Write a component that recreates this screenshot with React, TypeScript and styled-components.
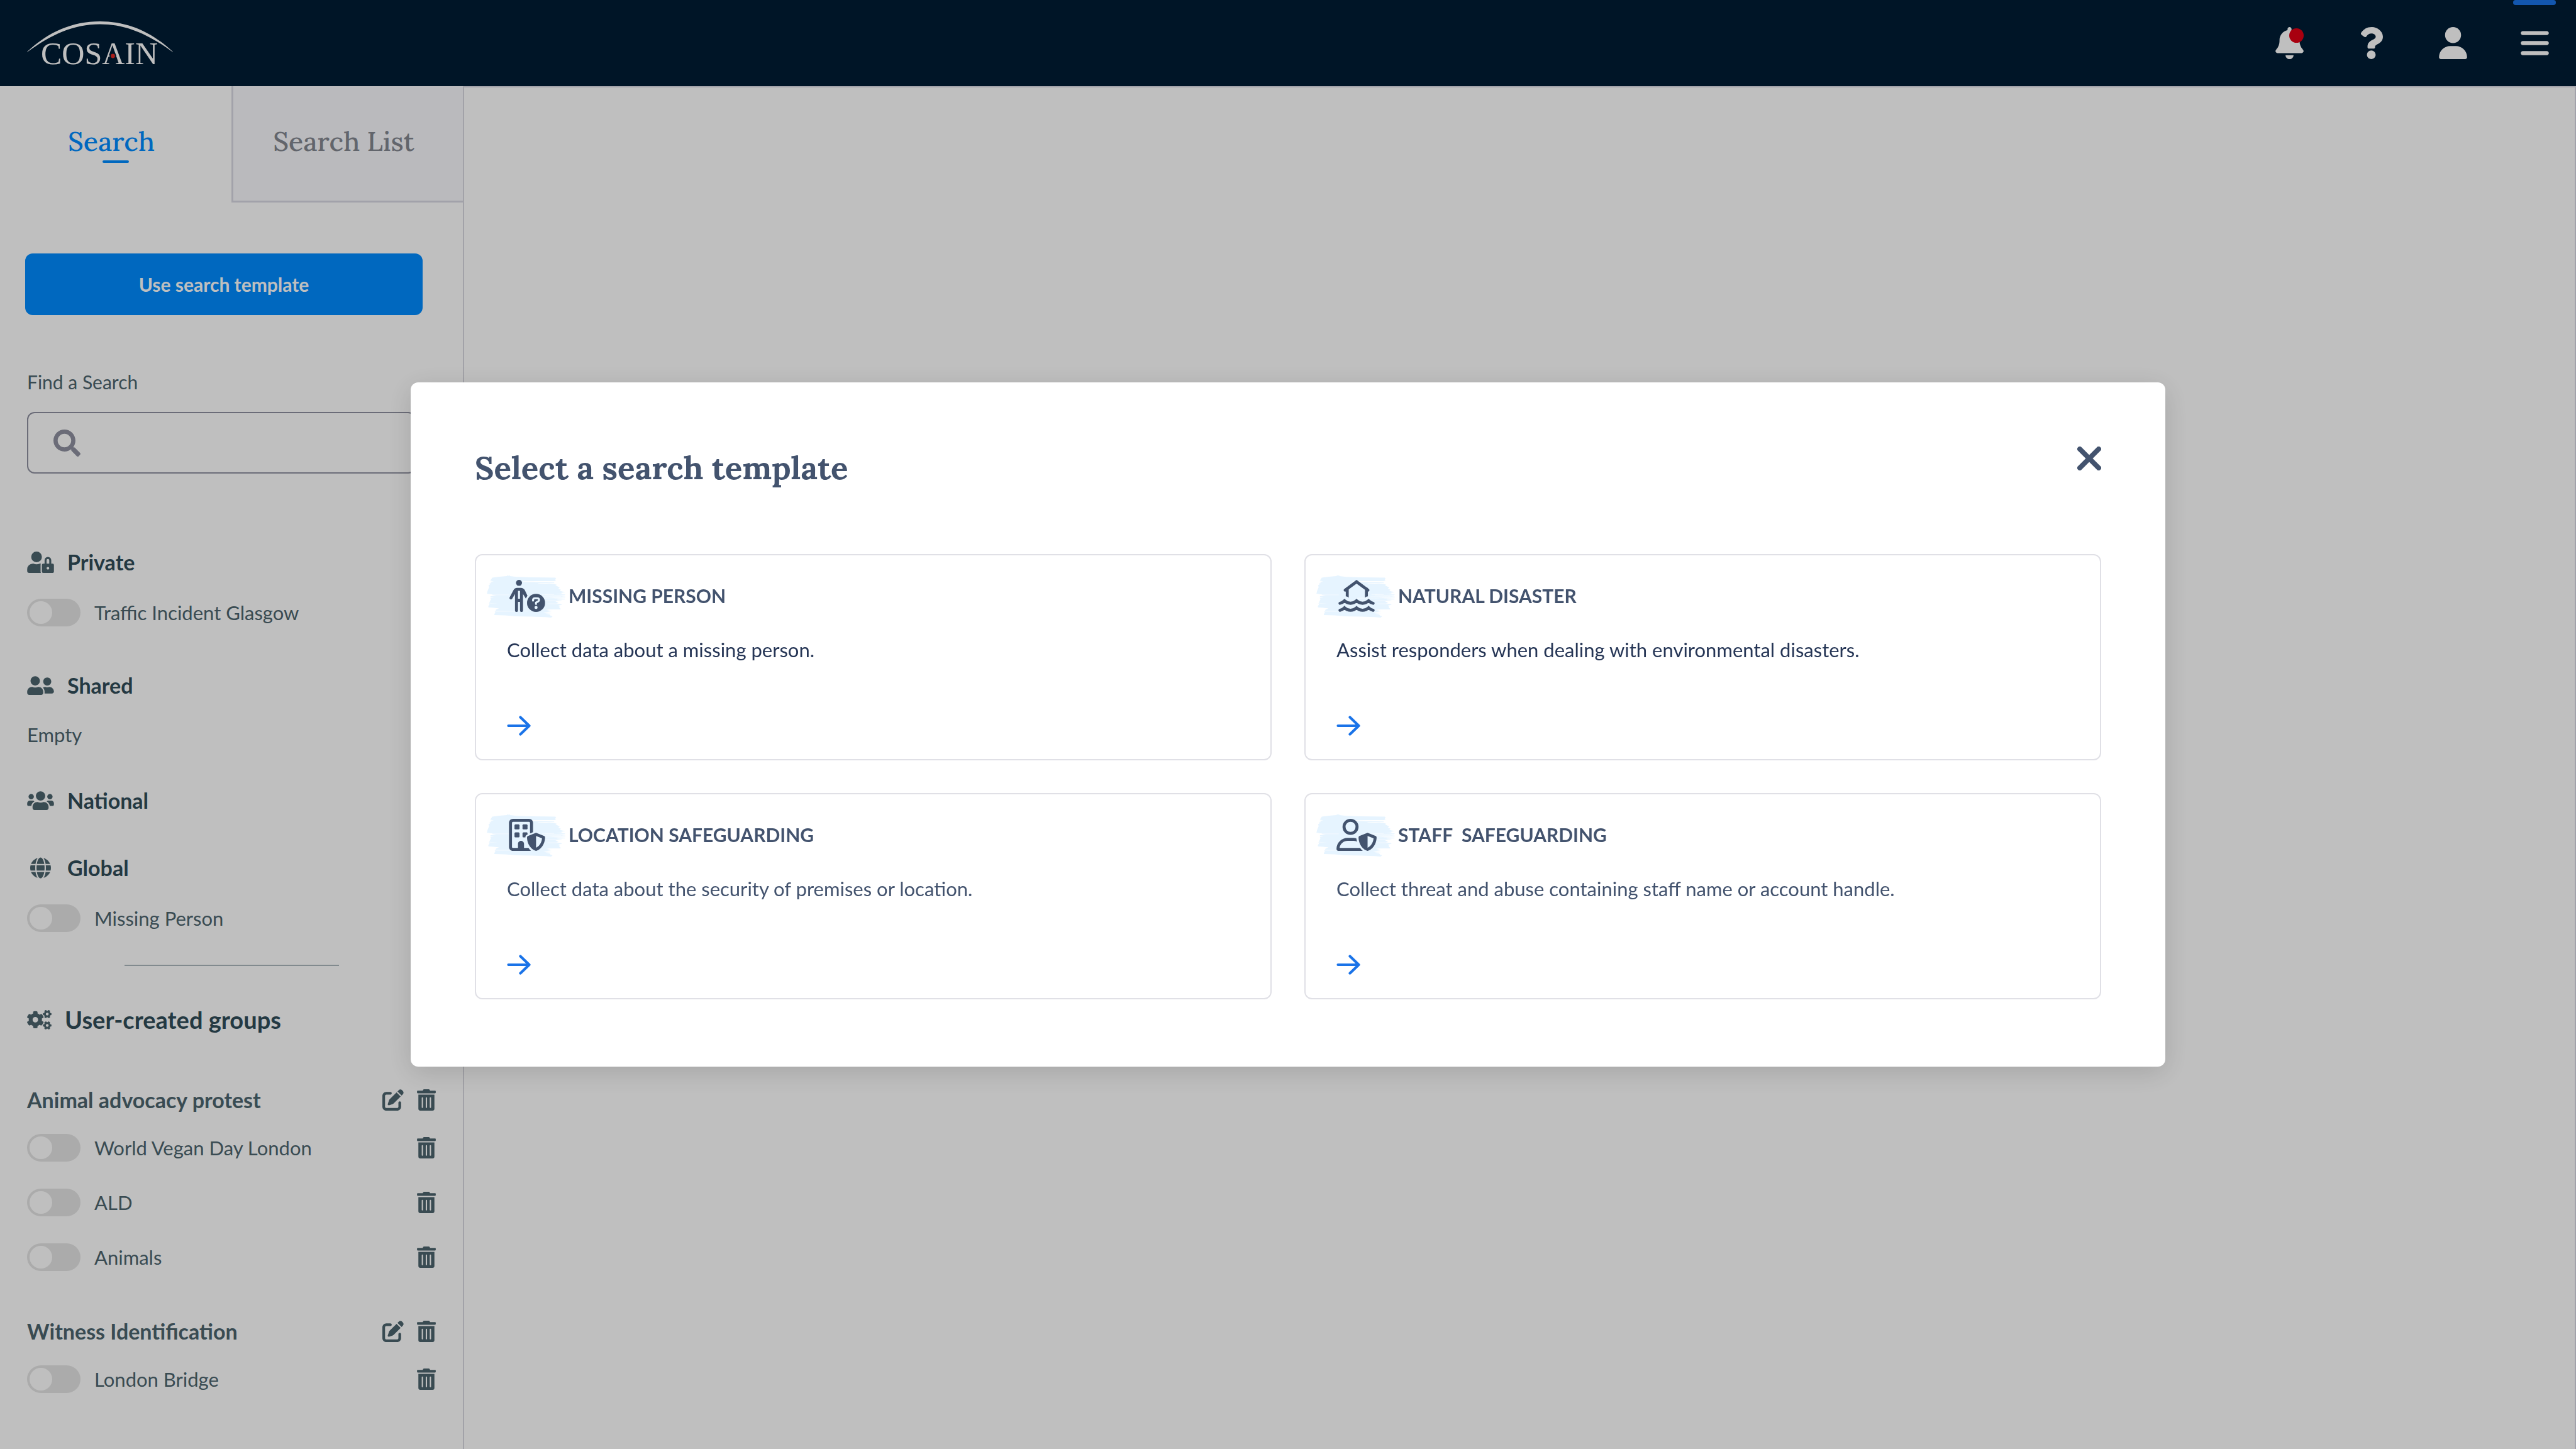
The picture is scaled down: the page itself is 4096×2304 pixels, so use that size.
import React from "react";
import styled, { createGlobalStyle } from "styled-components";
import { FaCogs, FaGlobe, FaQuestion, FaSearch, FaTrashAlt, FaUserFriends, FaUserLock, FaUsers } from "react-icons/fa";
import { FaBars, FaBell, FaPenToSquare, FaUser } from "react-icons/fa6";

const sans = `Lato, "Open Sans", "Liberation Sans", sans-serif`;
const serif = `Lora, "Liberation Serif", serif`;

const GlobalStyle = createGlobalStyle`
  *, *::before, *::after { box-sizing: border-box; }
  body { margin: 0; background: #ffffff; font-family: ${sans}; font-size: 31px; line-height: 36px; color: #4c646e; }
  h1, h2, h3, p { margin: 0; font-weight: 400; }
  button, input { font: inherit; color: inherit; }
  button { padding: 0; border: 0; background: none; cursor: pointer; }
  svg { display: block; flex: none; }
`;

const Shell = styled.div`
  display: flex;
  flex-direction: column;
  min-height: 100vh;
`;

const Header = styled.header`
  display: flex;
  align-items: center;
  justify-content: space-between;
  height: 137px;
  padding: 0 43px;
  background: #001c34;
`;

const LogoLink = styled.a`
  display: block;
  margin-top: 10px;
`;

const HeaderActions = styled.nav`
  display: flex;
  gap: 85px;
  height: 100%;
`;

const HeaderButton = styled.button`
  position: relative;
  display: flex;
  align-items: center;
  justify-content: center;
  width: 45px;
  height: 100%;
  color: #ffffff;

  svg { width: 45px; height: 51px; }
`;

const AlertDot = styled.span`
  position: absolute;
  top: 45px;
  left: 22px;
  width: 23px;
  height: 23px;
  border-radius: 50%;
  background: #e00015;
`;

const ActiveMark = styled.span`
  position: absolute;
  top: 0;
  left: -12px;
  width: 68px;
  height: 8px;
  border-radius: 4px;
  background: #1a73e8;
`;

const Body = styled.div`
  display: flex;
  flex: 1;
`;

const Sidebar = styled.aside`
  flex: none;
  width: 738px;
  border-right: 2px solid #d9d9e0;
`;

const Main = styled.main`
  flex: 1;
  border-top: 2px solid #d9d9e3;
  border-right: 2px solid #d9d9e3;
`;

const Tabs = styled.div`
  display: grid;
  grid-template-columns: 1fr 1fr;
  height: 185px;
`;

const Tab = styled.button<{ $active?: boolean }>`
  display: flex;
  flex-direction: column;
  align-items: center;
  padding-top: 58px;
  font-family: ${serif};
  font-size: 43px;
  font-weight: 500;
  line-height: 60px;
  color: ${(p) => (p.$active ? "#008bff" : "#838791")};
  background: ${(p) => (p.$active ? "transparent" : "#f9f9fc")};
  border-left: ${(p) => (p.$active ? "0" : "3px solid #d9d9e3")};
  border-bottom: ${(p) => (p.$active ? "0" : "3px solid #d9d9e3")};
`;

const TabLabel = styled.span`
  padding-right: 14px;
`;

const TabMark = styled.span`
  width: 42px;
  height: 4px;
  border-radius: 2px;
  background: #008bff;
`;

const SidebarContent = styled.div`
  padding: 81px 43px 43px;
`;

const PrimaryButton = styled.button`
  display: block;
  width: 632px;
  height: 98px;
  margin-left: -3px;
  border-radius: 12px;
  background: #008bff;
  color: #ffffff;
  font-size: 30px;
  font-weight: 700;
`;

const FieldLabel = styled.label`
  display: block;
  margin: 88px 0 30px;
  font-size: 30px;
`;

const SearchField = styled.div`
  display: flex;
  align-items: center;
  gap: 22px;
  width: 618px;
  height: 98px;
  padding: 0 40px;
  border: 2px solid #8f91a0;
  border-radius: 12px;
  color: #8f91a0;

  svg { width: 43px; height: 43px; }
`;

const SearchInput = styled.input`
  flex: 1;
  min-width: 0;
  border: 0;
  outline: 0;
  background: none;
`;

const Sections = styled.div`
  display: flex;
  flex-direction: column;
  gap: 63px;
  margin-top: 119px;
`;

const Section = styled.section<{ $roomy?: boolean }>`
  display: flex;
  flex-direction: column;
  gap: 36px;
  padding-bottom: ${(p) => (p.$roomy ? "9px" : "0")};
`;

const SectionHead = styled.h2<{ $large?: boolean }>`
  display: flex;
  align-items: center;
  gap: 21px;
  height: 44px;
  font-size: ${(p) => (p.$large ? "38px" : "34px")};
  font-weight: 700;
  color: #304c58;

  svg {
    width: ${(p) => (p.$large ? "39px" : "43px")};
    height: ${(p) => (p.$large ? "31px" : "34px")};
    color: #4c646e;
  }
`;

const EmptyNote = styled.p`
  height: 40px;
  line-height: 40px;
`;

const ToggleLabel = styled.label`
  display: flex;
  align-items: center;
  gap: 22px;
  height: 44px;
`;

const Switch = styled.input`
  appearance: none;
  display: block;
  flex: none;
  width: 85px;
  height: 44px;
  margin: 0;
  padding: 4px;
  border-radius: 22px;
  background: #e5e5e5;

  &::before {
    content: "";
    display: block;
    width: 36px;
    height: 36px;
    border-radius: 50%;
    background: #ffffff;
  }

  &:checked { background: #008bff; }
  &:checked::before { margin-left: 41px; }
`;

const Divider = styled.hr`
  width: 341px;
  height: 2px;
  margin: 43px auto 63px;
  border: 0;
  background: #adb9be;
`;

const Groups = styled.div`
  display: flex;
  flex-direction: column;
  gap: 74px;
  margin-top: 84px;
`;

const Group = styled.section``;

const Row = styled.div`
  display: flex;
  align-items: center;
  justify-content: space-between;
  height: 44px;
`;

const GroupName = styled.h3`
  font-size: 34px;
  font-weight: 700;
`;

const RowActions = styled.div`
  display: flex;
  gap: 21px;
`;

const IconButton = styled.button<{ $wide?: boolean }>`
  color: #4c646e;

  svg {
    width: ${(p) => (p.$wide ? "34px" : "30px")};
    height: 34px;
  }
`;

const GroupItems = styled.div`
  display: flex;
  flex-direction: column;
  gap: 43px;
  margin-top: 32px;
`;

const Backdrop = styled.div`
  position: fixed;
  inset: 0;
  display: flex;
  align-items: center;
  justify-content: center;
  background: rgba(0, 0, 0, 0.25);
`;

const Modal = styled.section`
  width: min(2790px, 92vw);
  padding: 102px 102px 107px;
  border-radius: 12px;
  background: #ffffff;
  box-shadow: 0 9px 43px rgba(0, 0, 0, 0.14);
  color: #43536e;
`;

const ModalHead = styled.div`
  display: flex;
  align-items: flex-start;
  justify-content: space-between;
  margin-bottom: 103px;
`;

const ModalTitle = styled.h1`
  font-family: ${serif};
  font-size: 51px;
  line-height: 68px;
  font-weight: 700;
`;

const CardGrid = styled.div`
  display: grid;
  grid-template-columns: 1fr 1fr;
  gap: 52px;
`;

const Card = styled.article`
  display: flex;
  flex-direction: column;
  align-items: flex-start;
  padding: 38px 49px 37px;
  border: 2px solid #e0e0e6;
  border-radius: 12px;
`;

const CardHead = styled.div`
  display: flex;
  align-items: center;
  gap: 34px;
  height: 52px;
`;

const CardIcon = styled.span`
  position: relative;
  width: 64px;
`;

const Brush = styled.svg`
  position: absolute;
  top: -8px;
  left: -32px;
`;

const Glyph = styled.svg<{ $inset?: boolean }>`
  position: relative;
  margin-left: ${(p) => (p.$inset ? "3px" : "0")};
`;

const CardTitle = styled.h2`
  font-size: 30px;
  font-weight: 700;
  white-space: pre;
`;

const CardText = styled.p<{ $strong?: boolean }>`
  margin: 42px 0 87px;
  color: ${(p) => (p.$strong ? "#263656" : "#43536e")};
`;

const Logo = () => (
  <svg width="232" height="80" viewBox="0 0 232 80" aria-label="Cosain">
    <path fill="#fff" d="M0 48.500C34 16.500 72 0 116 0s82 16.500 116 48.500V49C194 21 158 4.400 116 4.400S38 21 0 49z" />
    <text x="22" y="68" fill="#fff" fontFamily="Liberation Serif, serif" fontSize="50">COSAIN</text>
    <circle cx="136.500" cy="55" r="4.400" fill="#e02a24" stroke="#001c34" strokeWidth="2" />
  </svg>
);

const BrushStroke = () => (
  <Brush width="128" height="68" viewBox="36 36 720 384" aria-hidden="true">
    <path
      fill="#e6f4ff"
      d="M84 62 150 53 215 47 222 40 232 46 238 37 242 47 300 54 420 58 560 60 650 62 657 68 650 76 655 88 640 92 500 93 360 94 360 100 560 102 640 103 640 108 560 110 495 112 495 116 600 114 640 118 665 126 650 130 672 140 690 150 676 160 700 168 690 178 710 186 738 190 700 200 716 206 650 208 738 213 736 220 690 228 740 232 738 238 640 240 600 244 736 250 738 256 660 260 716 268 650 274 680 284 660 292 700 298 712 304 676 312 690 322 684 328 700 342 694 347 640 346 566 348 600 354 570 358 620 362 590 368 540 372 620 380 560 384 600 392 606 402 626 408 612 420 560 416 440 412 300 408 200 400 104 398 102 388 112 376 106 364 290 364 112 360 118 348 144 338 100 332 50 328 48 318 60 300 52 292 140 294 56 288 66 268 72 256 66 244 100 241 64 236 70 228 120 224 88 218 84 212 36 206 42 180 56 146 50 130 64 122 58 114 78 110 62 98 98 95 66 88z"
    />
    <path
      fill="none"
      stroke="#fff"
      strokeWidth="3"
      d="M84 216H236M110 364H300M300 357 400 362M560 216 740 222M520 228 700 230M400 246 700 243M560 268H690M580 296H680M530 212H640"
    />
  </Brush>
);

const shield =
  "M423.1 225.7c5.7-2.3 12.1-2.3 17.8 0l120 48c9.1 3.7 15.1 12.5 15.1 22.3 0 63.3-25.9 168.8-134.8 214.2-5.9 2.5-12.6 2.5-18.5 0C313.9 464.8 288 359.3 288 296c0-9.8 6-18.6 15.1-22.3zM527.4 312 432 273.8v187.9c68.2-33 91.5-99 95.4-149.7z";

const MissingPersonGlyph = () => (
  <Glyph $inset width="58" height="51" viewBox="234 84 324 288" fill="currentColor" aria-hidden="true">
    <circle cx="324" cy="111" r="27" />
    <path
      fillRule="evenodd"
      d="M306 156h36c14 0 26 7 33 19l25 52-15 25-25-41v148a13.5 13.5 0 0 1-27 0v-77h-18v77a13.5 13.5 0 0 1-27 0V211l-25 43a13.5 13.5 0 0 1-23-14l34-63c7-14 18-21 32-21zm9 27v71h18v-71z"
    />
    <circle cx="477" cy="291" r="81" />
    <path
      fill="none"
      stroke="#e6f4ff"
      strokeWidth="18"
      strokeLinecap="round"
      d="M450 270v-4q0-17 17-17h20c12 0 17 8 17 15s-4 11-9 14l-18 10v12"
    />
    <circle cx="477" cy="332" r="14" fill="#e6f4ff" />
  </Glyph>
);

const FloodGlyph = () => (
  <Glyph $inset width="58" height="51" viewBox="0 0 576 512" fill="none" stroke="currentColor" strokeWidth="48" aria-hidden="true">
    <path strokeLinecap="round" d="M106 164 288 30l182 134" />
    <path fill="currentColor" stroke="none" d="M116 130v134q24 2 47 20V110zM469 130v134q-24 2-47 20V110z" />
    <path strokeLinecap="round" d="M24 374q40-8 72-40 44 40 96 40t96-40q44 40 96 40t96-40q32 32 72 40" />
    <path strokeLinecap="round" d="M24 486q40-8 72-40 44 40 96 40t96-40q44 40 96 40t96-40q32 32 72 40" />
  </Glyph>
);

const BuildingShieldGlyph = () => (
  <Glyph $inset width="58" height="51" viewBox="0 0 576 512" fill="currentColor" aria-hidden="true">
    <path d="M64 0h256c35.3 0 64 28.7 64 64v150l-48 20V64c0-8.8-7.2-16-16-16H64c-8.8 0-16 7.2-16 16v384c0 8.8 7.2 16 16 16h80v-64c0-26.5 21.5-48 48-48s48 21.5 48 48v64h72q16 27 40 46c-4 1-20 2-32 2H64c-35.3 0-64-28.7-64-64V64C0 28.7 28.7 0 64 0z" />
    <rect x="88" y="88" width="80" height="80" rx="16" />
    <rect x="216" y="88" width="80" height="80" rx="16" />
    <rect x="88" y="216" width="80" height="80" rx="16" />
    <path d="M232 216h48c8 0 14 6 16 12v22c-12 5-22 10-28 18-4 8-6 18-6 28h-30c-8.8 0-16-7.2-16-16v-48c0-8.8 7.2-16 16-16z" />
    <path fillRule="evenodd" d={shield} />
  </Glyph>
);

const UserShieldGlyph = () => (
  <Glyph width="64" height="51" viewBox="0 0 640 512" fill="currentColor" aria-hidden="true">
    <circle cx="224" cy="128" r="104" fill="none" stroke="currentColor" strokeWidth="48" />
    <path d="M178.3 304H270c16 0 32 2 46 6l12 53c-17-7.4-36-11-58-11h-91.7c-65.7 0-120.1 48.7-129 112H376q20 28 44 48H29.7C13.3 512 0 498.7 0 482.3 0 383.8 79.8 304 178.3 304z" />
    <path fillRule="evenodd" transform="translate(64)" d={shield} />
  </Glyph>
);

const ArrowGlyph = () => (
  <svg width="38" height="32" viewBox="0 0 38 32" fill="none" stroke="#1a73e8" strokeWidth="4.2" strokeLinecap="round" strokeLinejoin="round" aria-hidden="true">
    <path d="M2.5 16H35.500M21.500 2.500 35.500 16l-14 13.500" />
  </svg>
);

const CloseGlyph = () => (
  <svg width="38" height="38" viewBox="0 0 38 38" fill="none" stroke="#43536e" strokeWidth="8" strokeLinecap="round" aria-hidden="true">
    <path d="M4 4l30 30M34 4 4 34" />
  </svg>
);

const templates = [
  { title: "MISSING PERSON", text: "Collect data about a missing person.", strong: true, Icon: MissingPersonGlyph },
  { title: "NATURAL DISASTER", text: "Assist responders when dealing with environmental disasters.", strong: true, Icon: FloodGlyph },
  { title: "LOCATION SAFEGUARDING", text: "Collect data about the security of premises or location.", strong: false, Icon: BuildingShieldGlyph },
  { title: "STAFF  SAFEGUARDING", text: "Collect threat and abuse containing staff name or account handle.", strong: false, Icon: UserShieldGlyph },
];

const groups = [
  { name: "Animal advocacy protest", items: ["World Vegan Day London", "ALD", "Animals"] },
  { name: "Witness Identification", items: ["London Bridge"] },
];

const Toggle = ({ label }: { label: string }) => (
  <ToggleLabel>
    <Switch type="checkbox" role="switch" />
    {label}
  </ToggleLabel>
);

export default function App() {
  return (
    <>
      <GlobalStyle />
      <Shell>
        <Header>
          <LogoLink href="#home"><Logo /></LogoLink>
          <HeaderActions>
            <HeaderButton aria-label="Notifications"><FaBell /><AlertDot /></HeaderButton>
            <HeaderButton aria-label="Help"><FaQuestion /></HeaderButton>
            <HeaderButton aria-label="Account"><FaUser /></HeaderButton>
            <HeaderButton aria-label="Menu"><ActiveMark /><FaBars /></HeaderButton>
          </HeaderActions>
        </Header>
        <Body>
          <Sidebar>
            <Tabs role="tablist">
              <Tab role="tab" aria-selected="true" $active><TabLabel>Search</TabLabel><TabMark /></Tab>
              <Tab role="tab" aria-selected="false"><TabLabel>Search List</TabLabel></Tab>
            </Tabs>
            <SidebarContent>
              <PrimaryButton>Use search template</PrimaryButton>
              <FieldLabel htmlFor="find-search">Find a Search</FieldLabel>
              <SearchField>
                <FaSearch />
                <SearchInput id="find-search" type="text" />
              </SearchField>
              <Sections>
                <Section $roomy>
                  <SectionHead><FaUserLock />Private</SectionHead>
                  <Toggle label="Traffic Incident Glasgow" />
                </Section>
                <Section>
                  <SectionHead><FaUserFriends />Shared</SectionHead>
                  <EmptyNote>Empty</EmptyNote>
                </Section>
                <Section>
                  <SectionHead><FaUsers />National</SectionHead>
                </Section>
                <Section $roomy>
                  <SectionHead><FaGlobe />Global</SectionHead>
                  <Toggle label="Missing Person" />
                </Section>
              </Sections>
              <Divider />
              <SectionHead $large><FaCogs />User-created groups</SectionHead>
              <Groups>
                {groups.map((group) => (
                  <Group key={group.name}>
                    <Row>
                      <GroupName>{group.name}</GroupName>
                      <RowActions>
                        <IconButton $wide aria-label={`Edit ${group.name}`}><FaPenToSquare /></IconButton>
                        <IconButton aria-label={`Delete ${group.name}`}><FaTrashAlt /></IconButton>
                      </RowActions>
                    </Row>
                    <GroupItems>
                      {group.items.map((item) => (
                        <Row key={item}>
                          <Toggle label={item} />
                          <IconButton aria-label={`Delete ${item}`}><FaTrashAlt /></IconButton>
                        </Row>
                      ))}
                    </GroupItems>
                  </Group>
                ))}
              </Groups>
            </SidebarContent>
          </Sidebar>
          <Main />
        </Body>
      </Shell>
      <Backdrop>
        <Modal role="dialog" aria-modal="true" aria-labelledby="modal-title">
          <ModalHead>
            <ModalTitle id="modal-title">Select a search template</ModalTitle>
            <button aria-label="Close"><CloseGlyph /></button>
          </ModalHead>
          <CardGrid>
            {templates.map(({ title, text, strong, Icon }) => (
              <Card key={title}>
                <CardHead>
                  <CardIcon><BrushStroke /><Icon /></CardIcon>
                  <CardTitle>{title}</CardTitle>
                </CardHead>
                <CardText $strong={strong}>{text}</CardText>
                <button aria-label={`Use ${title}`}><ArrowGlyph /></button>
              </Card>
            ))}
          </CardGrid>
        </Modal>
      </Backdrop>
    </>
  );
}
